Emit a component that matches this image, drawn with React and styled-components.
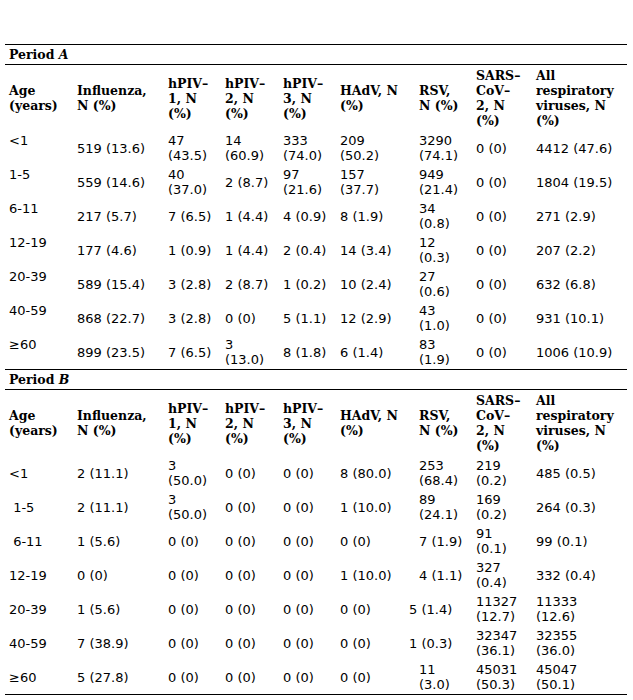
import React from "react";
import styled, { createGlobalStyle } from "styled-components";

const GlobalStyle = createGlobalStyle`
    html, body {
        margin: 0;
        padding: 0;
        background: #fff;
    }
`;

const Page = styled.div`
    padding: 44px 6px 0 5px;
    width: 622px;
    color: #000;
`;

const Table = styled.table`
    width: 622px;
    border-collapse: collapse;
    table-layout: fixed;
    border-top: 1px solid #000;
    border-bottom: 1px solid #000;
`;

const PeriodRow = styled.tr`
    border-top: ${(props) => (props.$first ? "none" : "1px solid #000")};
    border-bottom: 1px solid #000;
`;

const PeriodCell = styled.td`
    padding: 2px 4px;
    font-family: "DejaVu Serif", serif;
    font-weight: 700;
    font-size: 12.5px;
    line-height: 15px;

    em {
        font-style: italic;
    }
`;

const HeadCell = styled.th`
    padding: 3px 4px;
    font-family: "DejaVu Serif", serif;
    font-weight: 700;
    font-size: 12.5px;
    line-height: 15px;
    text-align: left;
    vertical-align: middle;
    white-space: pre;
`;

const Cell = styled.td`
    height: 30px;
    padding: 2px 4px;
    font-family: "DejaVu Sans", sans-serif;
    font-weight: 400;
    font-size: 13px;
    line-height: 15px;
    text-align: left;
    vertical-align: ${(props) => props.$valign || "middle"};
    white-space: pre;
    text-indent: ${(props) => (props.$outdent ? "-10px" : "0")};
`;

const widths = [68, 91, 57, 58, 57, 79, 57, 60, 95];

const headers = [
    "Age\n(years)",
    "Influenza,\nN (%)",
    "hPIV–\n1, N\n(%)",
    "hPIV–\n2, N\n(%)",
    "hPIV–\n3, N\n(%)",
    "HAdV, N\n(%)",
    "RSV,\nN (%)",
    "SARS–\nCoV–\n2, N\n(%)",
    "All\nrespiratory\nviruses, N\n(%)",
];

const periods = [
    {
        name: "A",
        ageAlign: "top",
        rows: [
            ["<1", "519 (13.6)", "47\n(43.5)", "14\n(60.9)", "333\n(74.0)", "209\n(50.2)", "3290\n(74.1)", "0 (0)", "4412 (47.6)"],
            ["1-5", "559 (14.6)", "40\n(37.0)", "2 (8.7)", "97\n(21.6)", "157\n(37.7)", "949\n(21.4)", "0 (0)", "1804 (19.5)"],
            ["6-11", "217 (5.7)", "7 (6.5)", "1 (4.4)", "4 (0.9)", "8 (1.9)", "34\n(0.8)", "0 (0)", "271 (2.9)"],
            ["12-19", "177 (4.6)", "1 (0.9)", "1 (4.4)", "2 (0.4)", "14 (3.4)", "12\n(0.3)", "0 (0)", "207 (2.2)"],
            ["20-39", "589 (15.4)", "3 (2.8)", "2 (8.7)", "1 (0.2)", "10 (2.4)", "27\n(0.6)", "0 (0)", "632 (6.8)"],
            ["40-59", "868 (22.7)", "3 (2.8)", "0 (0)", "5 (1.1)", "12 (2.9)", "43\n(1.0)", "0 (0)", "931 (10.1)"],
            ["≥60", "899 (23.5)", "7 (6.5)", "3\n(13.0)", "8 (1.8)", "6 (1.4)", "83\n(1.9)", "0 (0)", "1006 (10.9)"],
        ],
    },
    {
        name: "B",
        ageAlign: "middle",
        rows: [
            ["<1", "2 (11.1)", "3\n(50.0)", "0 (0)", "0 (0)", "8 (80.0)", "253\n(68.4)", "219\n(0.2)", "485 (0.5)"],
            ["\u00a01-5", "2 (11.1)", "3\n(50.0)", "0 (0)", "0 (0)", "1 (10.0)", "89\n(24.1)", "169\n(0.2)", "264 (0.3)"],
            ["\u00a06-11", "1 (5.6)", "0 (0)", "0 (0)", "0 (0)", "0 (0)", "7 (1.9)", "91\n(0.1)", "99 (0.1)"],
            ["12-19", "0 (0)", "0 (0)", "0 (0)", "0 (0)", "1 (10.0)", "4 (1.1)", "327\n(0.4)", "332 (0.4)"],
            ["20-39", "1 (5.6)", "0 (0)", "0 (0)", "0 (0)", "0 (0)", { v: "5 (1.4)", outdent: true }, "11327\n(12.7)", "11333\n(12.6)"],
            ["40-59", "7 (38.9)", "0 (0)", "0 (0)", "0 (0)", "0 (0)", { v: "1 (0.3)", outdent: true }, "32347\n(36.1)", "32355\n(36.0)"],
            ["≥60", "5 (27.8)", "0 (0)", "0 (0)", "0 (0)", "0 (0)", "11\n(3.0)", "45031\n(50.3)", "45047\n(50.1)"],
        ],
    },
];

function DataRow({ row, ageAlign }) {
    return (
        <tr>
            {row.map((cell, i) => {
                const value = typeof cell === "string" ? cell : cell.v;
                return (
                    <Cell
                        key={i}
                        $valign={i === 0 ? ageAlign : "middle"}
                        $outdent={typeof cell !== "string" && cell.outdent}
                    >
                        {value}
                    </Cell>
                );
            })}
        </tr>
    );
}

function PeriodSection({ period, first }) {
    return (
        <tbody>
            <PeriodRow $first={first}>
                <PeriodCell colSpan={9}>
                    Period <em>{period.name}</em>
                </PeriodCell>
            </PeriodRow>
            <tr>
                {headers.map((h) => (
                    <HeadCell key={h}>{h}</HeadCell>
                ))}
            </tr>
            {period.rows.map((row) => (
                <DataRow key={row[0]} row={row} ageAlign={period.ageAlign} />
            ))}
        </tbody>
    );
}

function App() {
    return (
        <>
            <GlobalStyle />
            <Page>
                <Table>
                    <colgroup>
                        {widths.map((w, i) => (
                            <col key={i} style={{ width: w }} />
                        ))}
                    </colgroup>
                    {periods.map((p, i) => (
                        <PeriodSection key={p.name} period={p} first={i === 0} />
                    ))}
                </Table>
            </Page>
        </>
    );
}

export default App;
